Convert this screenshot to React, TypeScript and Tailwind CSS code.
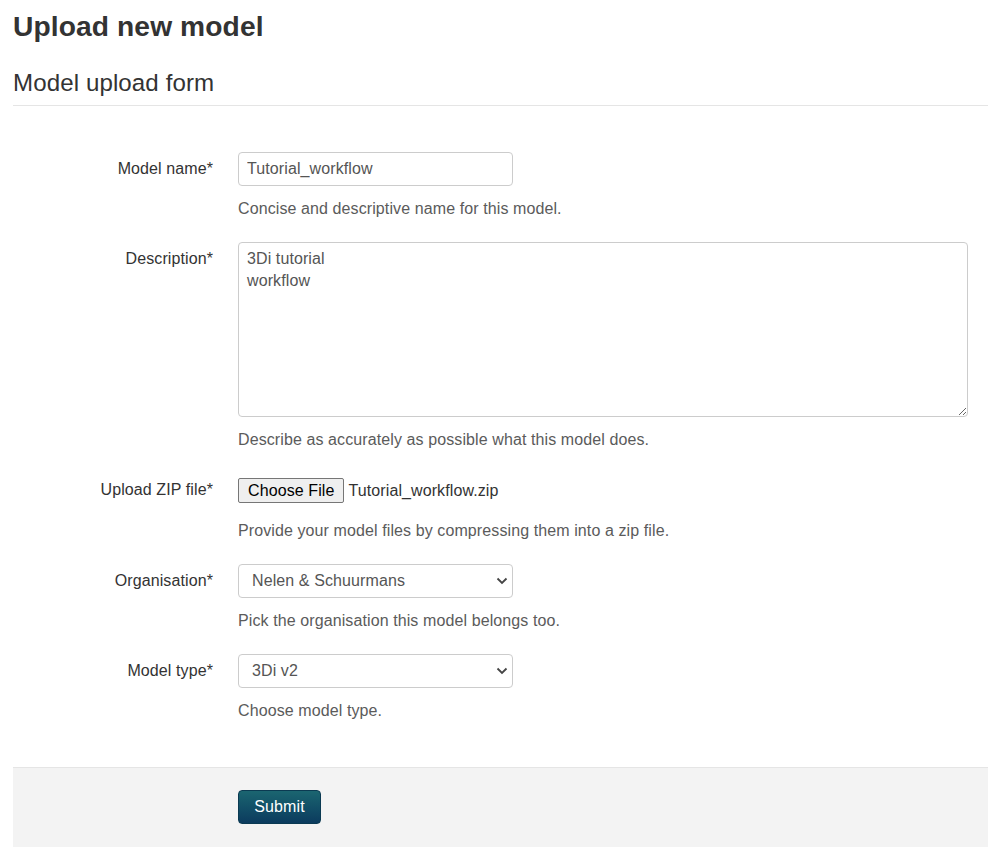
import React from "react";

function Chevron() {
  return (
    <svg
      className="pointer-events-none absolute right-[5px] top-1/2 -translate-y-1/2"
      width="12"
      height="8"
      viewBox="0 0 12 8"
      fill="none"
    >
      <path d="M1.5 1.5 L6 6 L10.5 1.5" stroke="#444" strokeWidth="1.8" />
    </svg>
  );
}

export default function App() {
  return (
    <div className="min-h-[860px] bg-white px-[13px] font-['Liberation_Sans',Arial,sans-serif] text-[16px] tracking-[0.1px] text-[#333]">
      <h1 className="pt-[9px] text-[28.2px] font-bold leading-[34px] text-[#333]">Upload new model</h1>
      <h3 className="mt-[26px] border-b border-[#e5e5e5] pb-[8px] text-[24.1px] leading-[28px] text-[#333]">
        Model upload form
      </h3>

      <form className="pt-[46px]">
        {/* Model name */}
        <div className="mb-[22px] flex gap-[25px]">
          <label className="w-[200px] shrink-0 pt-[7px] text-right leading-[20px]">Model name*</label>
          <div>
            <input
              readOnly
              value="Tutorial_workflow"
              className="block h-[34px] w-[275px] rounded-[4px] border border-[#ccc] px-[8px] leading-[20px] text-[#555] outline-none"
            />
            <p className="mt-[12px] leading-[22px] text-[#5b5b5b]">Concise and descriptive name for this model.</p>
          </div>
        </div>

        {/* Description */}
        <div className="mb-[22px] flex gap-[25px]">
          <label className="w-[200px] shrink-0 pt-[7px] text-right leading-[20px]">Description*</label>
          <div>
            <textarea
              readOnly
              value={"3Di tutorial\nworkflow"}
              className="block h-[175px] w-[730px] resize-y rounded-[4px] border border-[#ccc] px-[8px] pt-[5px] leading-[22px] text-[#555] outline-none"
            />
            <p className="mt-[12px] leading-[22px] text-[#5b5b5b]">Describe as accurately as possible what this model does.</p>
          </div>
        </div>

        {/* Upload */}
        <div className="mb-[22px] flex gap-[25px]">
          <label className="w-[200px] shrink-0 pt-[7px] text-right leading-[20px]">Upload ZIP file*</label>
          <div>
            <div className="flex h-[35px] items-start pt-[5px]">
              <span className="flex h-[25px] items-center rounded-[2px] border border-[#767676] bg-[#efefef] px-[9px] leading-[20px] text-black">
                Choose File
              </span>
              <span className="ml-[4px] flex h-[25px] items-center leading-[20px] text-[#333]">Tutorial_workflow.zip</span>
            </div>
            <p className="mt-[12px] leading-[22px] text-[#5b5b5b]">Provide your model files by compressing them into a zip file.</p>
          </div>
        </div>

        {/* Organisation */}
        <div className="mb-[22px] flex gap-[25px]">
          <label className="w-[200px] shrink-0 pt-[7px] text-right leading-[20px]">Organisation*</label>
          <div>
            <div className="relative w-[275px]">
              <select
                defaultValue="ns"
                className="block h-[34px] w-full appearance-none rounded-[4px] border border-[#ccc] bg-white pl-[13px] pr-[24px] leading-[20px] text-[#555] outline-none"
              >
                <option value="ns">Nelen &amp; Schuurmans</option>
              </select>
              <Chevron />
            </div>
            <p className="mt-[12px] leading-[22px] text-[#5b5b5b]">Pick the organisation this model belongs too.</p>
          </div>
        </div>

        {/* Model type */}
        <div className="flex gap-[25px]">
          <label className="w-[200px] shrink-0 pt-[7px] text-right leading-[20px]">Model type*</label>
          <div>
            <div className="relative w-[275px]">
              <select
                defaultValue="v2"
                className="block h-[34px] w-full appearance-none rounded-[4px] border border-[#ccc] bg-white pl-[13px] pr-[24px] leading-[20px] text-[#555] outline-none"
              >
                <option value="v2">3Di v2</option>
              </select>
              <Chevron />
            </div>
            <p className="mt-[12px] leading-[22px] text-[#5b5b5b]">Choose model type.</p>
          </div>
        </div>

        {/* Footer */}
        <div className="mt-[45px] flex h-[80px] border-t border-[#e5e5e5] bg-[#f3f3f3] pt-[22px]">
          <div className="w-[225px] shrink-0" />
          <div>
            <button
              type="button"
              className="h-[34px] w-[83px] rounded-[4px] border border-[#0b3a52] bg-gradient-to-b from-[#1b6570] to-[#0c3b5e] text-center leading-[20px] text-white"
            >
              Submit
            </button>
          </div>
        </div>
      </form>
    </div>
  );
}
